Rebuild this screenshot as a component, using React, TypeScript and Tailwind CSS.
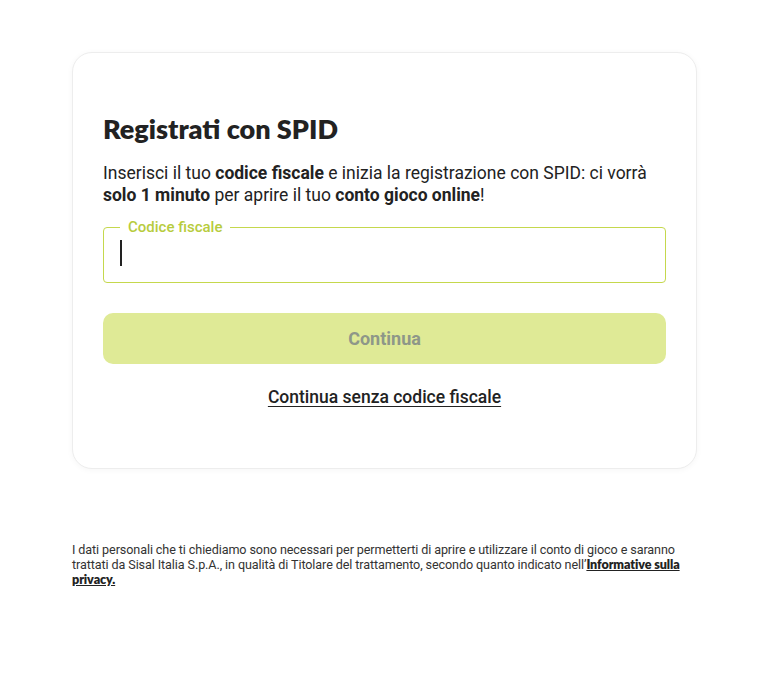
export default function App() {
  return (
    <div className="min-h-screen bg-white pt-[52px] px-[72px] font-['Roboto',sans-serif] text-[#1c1c1c]">
      <div className="w-[625px] h-[417px] bg-white rounded-[20px] border border-[#ededed] shadow-[0_1px_6px_rgba(0,0,0,0.04)] px-[30px] pt-[61px]">
        <h1 className="font-['Lato',sans-serif] font-extrabold text-[27px] leading-[30px] text-[#222]">
          Registrati con SPID
        </h1>
        <p className="mt-[18px] text-[17.5px] leading-[22px] text-[#222]">
          Inserisci il tuo <b className="font-bold">codice fiscale</b> e inizia la registrazione con SPID: ci vorrà{' '}
          <b className="font-bold">solo 1 minuto</b> per aprire il tuo <b className="font-bold">conto gioco online</b>!
        </p>
        <fieldset className="mt-[11px] h-[66px] border border-[#c5d84d] rounded-[4px] px-[16px]">
          <legend className="px-[8px] text-[15px] leading-[20px] font-medium text-[#b7cc3d]">
            Codice fiscale
          </legend>
          <div className="h-[26px] w-[1.5px] bg-[#222] mt-[3px]" />
        </fieldset>
        <button className="mt-[30px] w-full h-[51px] rounded-[10px] bg-[#dfea96] text-[18px] font-bold text-[#8e9789]">
          Continua
        </button>
        <div className="mt-[20px] text-center">
          <a className="text-[17.5px] font-medium underline underline-offset-[3px] text-[#222]">
            Continua senza codice fiscale
          </a>
        </div>
      </div>
      <p className="mt-[73px] w-[625px] text-[12.6px] leading-[15px] tracking-[-0.1px] text-[#333]">
        I dati personali che ti chiediamo sono necessari per permetterti di aprire e utilizzare il conto di gioco e saranno trattati da Sisal Italia S.p.A., in qualità di Titolare del trattamento, secondo quanto indicato nell’
        <a className="font-['Lato',sans-serif] font-extrabold underline text-[#222]">Informative sulla privacy.</a>
      </p>
    </div>
  );
}
